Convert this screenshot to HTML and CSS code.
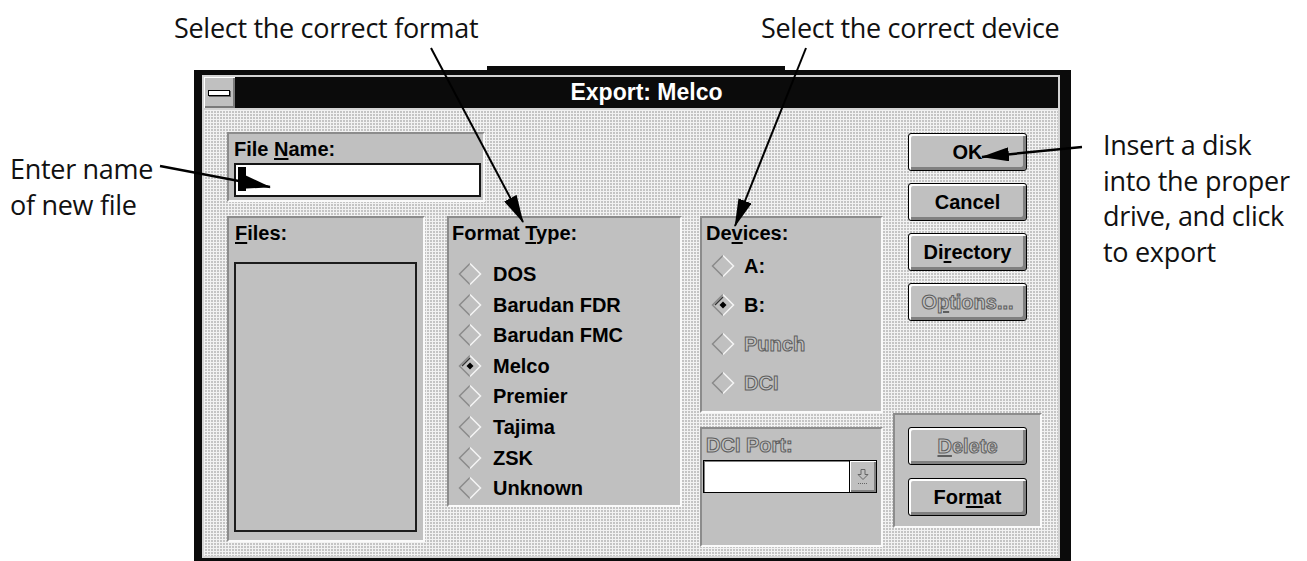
FILE: index.html
```html
<!DOCTYPE html>
<html lang="en">
<head>
    <meta charset="UTF-8">
    <meta name="viewport" content="width=device-width, initial-scale=1.0">
    <title>Export: Melco</title>
    <link rel="stylesheet" href="styles.css">
</head>
<body>
<div class="page">

    <div class="captions">
        <span class="note">Select the correct format</span>
        <span class="note">Select the correct device</span>
    </div>

    <div class="note note-left">Enter name<br>of new file</div>

    <div class="window">
        <div class="frame">
            <div class="titlebar">
                <div class="sysmenu"><span class="sysbar"></span></div>
                <div class="title">Export: Melco</div>
            </div>

            <div class="dialog">
                <div class="col-left">
                    <div class="group filename">
                        <div class="label">File <u>N</u>ame:</div>
                        <div class="textbox"><span class="caret"></span></div>
                    </div>
                    <div class="row">
                        <div class="group files">
                            <div class="label"><u>F</u>iles:</div>
                            <div class="listbox"></div>
                        </div>
                        <div class="group formats">
                            <div class="label">Format <u>T</u>ype:</div>
                            <ul class="radios">
                                <li class="radio"><svg viewBox="0 0 24 24"><path d="M12 1.5 1.5 12 12 22.5" fill="none" stroke="#8a8a8a" stroke-width="1.5"/><path d="M12 1.5 22.5 12 12 22.5" fill="none" stroke="#f4f4f4" stroke-width="1.5"/></svg>DOS</li>
                                <li class="radio"><svg viewBox="0 0 24 24"><path d="M12 1.5 1.5 12 12 22.5" fill="none" stroke="#8a8a8a" stroke-width="1.5"/><path d="M12 1.5 22.5 12 12 22.5" fill="none" stroke="#f4f4f4" stroke-width="1.5"/></svg>Barudan FDR</li>
                                <li class="radio"><svg viewBox="0 0 24 24"><path d="M12 1.5 1.5 12 12 22.5" fill="none" stroke="#8a8a8a" stroke-width="1.5"/><path d="M12 1.5 22.5 12 12 22.5" fill="none" stroke="#f4f4f4" stroke-width="1.5"/></svg>Barudan FMC</li>
                                <li class="radio"><svg viewBox="0 0 24 24"><path d="M12 1.5 1.5 12 12 22.5" fill="none" stroke="#8a8a8a" stroke-width="1.5"/><path d="M12 1.5 22.5 12 12 22.5" fill="none" stroke="#f4f4f4" stroke-width="1.5"/><path d="M12 4 4 12" fill="none" stroke="#333" stroke-width="1.2"/><path d="M12 8.5 15.5 12 12 15.5 8.5 12z" fill="#000"/></svg>Melco</li>
                                <li class="radio"><svg viewBox="0 0 24 24"><path d="M12 1.5 1.5 12 12 22.5" fill="none" stroke="#8a8a8a" stroke-width="1.5"/><path d="M12 1.5 22.5 12 12 22.5" fill="none" stroke="#f4f4f4" stroke-width="1.5"/></svg>Premier</li>
                                <li class="radio"><svg viewBox="0 0 24 24"><path d="M12 1.5 1.5 12 12 22.5" fill="none" stroke="#8a8a8a" stroke-width="1.5"/><path d="M12 1.5 22.5 12 12 22.5" fill="none" stroke="#f4f4f4" stroke-width="1.5"/></svg>Tajima</li>
                                <li class="radio"><svg viewBox="0 0 24 24"><path d="M12 1.5 1.5 12 12 22.5" fill="none" stroke="#8a8a8a" stroke-width="1.5"/><path d="M12 1.5 22.5 12 12 22.5" fill="none" stroke="#f4f4f4" stroke-width="1.5"/></svg>ZSK</li>
                                <li class="radio"><svg viewBox="0 0 24 24"><path d="M12 1.5 1.5 12 12 22.5" fill="none" stroke="#8a8a8a" stroke-width="1.5"/><path d="M12 1.5 22.5 12 12 22.5" fill="none" stroke="#f4f4f4" stroke-width="1.5"/></svg>Unknown</li>
                            </ul>
                        </div>
                    </div>
                </div>

                <div class="col-mid">
                    <div class="group devices">
                        <div class="label">De<u>v</u>ices:</div>
                        <ul class="radios">
                            <li class="radio"><svg viewBox="0 0 24 24"><path d="M12 1.5 1.5 12 12 22.5" fill="none" stroke="#8a8a8a" stroke-width="1.5"/><path d="M12 1.5 22.5 12 12 22.5" fill="none" stroke="#f4f4f4" stroke-width="1.5"/></svg>A:</li>
                            <li class="radio"><svg viewBox="0 0 24 24"><path d="M12 1.5 1.5 12 12 22.5" fill="none" stroke="#8a8a8a" stroke-width="1.5"/><path d="M12 1.5 22.5 12 12 22.5" fill="none" stroke="#f4f4f4" stroke-width="1.5"/><path d="M12 4 4 12" fill="none" stroke="#333" stroke-width="1.2"/><path d="M12 8.5 15.5 12 12 15.5 8.5 12z" fill="#000"/></svg>B:</li>
                            <li class="radio"><svg viewBox="0 0 24 24"><path d="M12 1.5 1.5 12 12 22.5" fill="none" stroke="#8a8a8a" stroke-width="1.5"/><path d="M12 1.5 22.5 12 12 22.5" fill="none" stroke="#f4f4f4" stroke-width="1.5"/></svg><span class="off">Punch</span></li>
                            <li class="radio"><svg viewBox="0 0 24 24"><path d="M12 1.5 1.5 12 12 22.5" fill="none" stroke="#8a8a8a" stroke-width="1.5"/><path d="M12 1.5 22.5 12 12 22.5" fill="none" stroke="#f4f4f4" stroke-width="1.5"/></svg><span class="off">DCI</span></li>
                        </ul>
                    </div>
                    <div class="group dciport">
                        <div class="label off">DCI Port:</div>
                        <div class="combo">
                            <div class="combo-field"></div>
                            <div class="combo-btn">
                                <svg width="14" height="18" viewBox="0 0 14 18"><path d="M5 1.5h4v5h3l-5 5-5-5h3z" fill="none" stroke="#666" stroke-width="1"/><path d="M2 15.5h10" stroke="#666" stroke-width="1" stroke-dasharray="1 1"/></svg>
                            </div>
                        </div>
                    </div>
                </div>

                <div class="col-right">
                    <div class="buttons">
                        <div class="btn">OK</div>
                        <div class="btn">Cancel</div>
                        <div class="btn">Di<u>r</u>ectory</div>
                        <div class="btn"><span class="off">O<u>p</u>tions...</span></div>
                    </div>
                    <div class="group actions">
                        <div class="btn"><span class="off"><u>D</u>elete</span></div>
                        <div class="btn">For<u>m</u>at</div>
                    </div>
                </div>
            </div>
        </div>
    </div>

    <div class="note note-right">Insert a disk<br>into the proper<br>drive, and click<br>to export</div>

    <!-- callout arrows drawn over the dialog -->
    <svg class="arrows" width="1307" height="561" viewBox="0 0 1307 561">
        <defs>
            <marker id="head" markerUnits="userSpaceOnUse" markerWidth="28" markerHeight="14" refX="27" refY="7" orient="auto">
                <path d="M0 0 28 7 0 14z" fill="#000"/>
            </marker>
        </defs>
        <line x1="431" y1="48" x2="523" y2="222" stroke="#000" stroke-width="2" marker-end="url(#head)"/>
        <line x1="806" y1="48" x2="735" y2="226" stroke="#000" stroke-width="2" marker-end="url(#head)"/>
        <line x1="160" y1="166" x2="270" y2="187" stroke="#000" stroke-width="2.5" marker-end="url(#head)"/>
        <line x1="1082" y1="147" x2="982" y2="157" stroke="#000" stroke-width="2.5" marker-end="url(#head)"/>
    </svg>

</div>
</body>
</html>
```

FILE: styles.css
```css
* {
    box-sizing: border-box;
}
body {
    margin: 0;
    background: #fff;
    font-family: "Open Sans", sans-serif;
}
.page {
    position: relative;
    width: 1307px;
    height: 561px;
    overflow: hidden;
    display: grid;
    grid-template-columns: 194px 877px 1fr;
    grid-template-rows: 70px 491px;
}

/* callout text */
.note {
    font-size: 27px;
    line-height: 35.5px;
    letter-spacing: -0.3px;
    color: #111;
}
.captions {
    grid-column: 1 / -1;
    display: flex;
    padding: 10px 0 0 174px;
}
.captions .note:first-child {
    width: 587px;
}
.note-left {
    padding: 81px 0 0 10px;
}
.note-right {
    padding: 57px 0 0 32px;
}
.arrows {
    position: absolute;
    left: 0;
    top: 0;
    pointer-events: none;
}

/* window chrome */
.window {
    position: relative;
    background: #0b0b0b;
    padding: 5px 11px 3px 8px;
}
.window::before {
    content: "";
    position: absolute;
    left: 293px;
    top: -4px;
    width: 298px;
    height: 4px;
    background: #0b0b0b;
}
.frame {
    border: 2px solid #d4d4d4;
}
.titlebar {
    display: flex;
    height: 33px;
    border-bottom: 2px solid #d4d4d4;
}
.sysmenu {
    width: 31px;
    display: flex;
    align-items: center;
    padding-left: 4px;
    background: #c0c0c0;
    box-shadow: inset 1px 1px #fff, inset -2px -2px #7a7a7a;
}
.sysbar {
    width: 22px;
    height: 6px;
    background: #fff;
    border: 1px solid #000;
    box-shadow: 1px 1px 0 #6a6a6a;
}
.title {
    flex: 1;
    background: #0b0b0b;
    color: #fff;
    font: bold 23px/31px "Liberation Sans", Arial, sans-serif;
    text-align: center;
}

/* dialog body */
.dialog {
    height: 446px;
    display: flex;
    padding: 22px 16px 0 23px;
    background-color: #c4c4c4;
    background-image: linear-gradient(90deg, #f2f2f2 1px, transparent 1px), linear-gradient(#f2f2f2 1px, transparent 1px);
    background-size: 3px 3px;
    font: bold 20px/20px "Liberation Sans", Arial, sans-serif;
    color: #000;
}
.dialog u {
    text-underline-offset: 2px;
}
.group {
    background: #c0c0c0;
    border: 2px solid;
    border-color: #8c8c8c #fafafa #fafafa #8c8c8c;
}
.off {
    color: #c4c4c4;
    -webkit-text-stroke: 1px #5e5e5e;
}

.col-left {
    width: 455px;
    display: flex;
    flex-direction: column;
}
.filename {
    width: 258px;
    height: 70px;
    padding: 5px 0 0 5px;
}
.textbox {
    margin-top: 4px;
    width: 247px;
    height: 34px;
    padding: 2px 0 0 2px;
    background: #fff;
    border: 2px solid #151515;
}
.caret {
    display: block;
    width: 8px;
    height: 24px;
    background: #000;
}
.row {
    display: flex;
    align-items: flex-start;
    gap: 22px;
    margin-top: 14px;
}
.files {
    width: 198px;
    height: 326px;
    padding: 5px 0 0 6px;
}
.listbox {
    margin: 19px 0 0 -1px;
    width: 183px;
    height: 270px;
    background: #c0c0c0;
    border: 2px solid #1c1c1c;
}
.formats {
    width: 235px;
    height: 291px;
    padding: 5px 0 0 3px;
}

.radios {
    list-style: none;
    margin: 0;
    padding: 0;
}
.radio {
    display: flex;
    align-items: center;
}
.radio svg {
    width: 24px;
    height: 24px;
    flex: none;
}
.formats .radios {
    margin-top: 15.7px;
    padding-left: 6px;
}
.formats .radio {
    height: 30.6px;
    gap: 11px;
}

.col-mid {
    width: 183px;
    margin-left: 18px;
    padding-top: 84px;
    display: flex;
    flex-direction: column;
    gap: 14px;
}
.devices {
    height: 197px;
    padding: 5px 0 0 4px;
}
.devices .radios {
    margin-top: 3.5px;
    padding-left: 5px;
}
.devices .radio {
    height: 39px;
    gap: 9px;
}
.dciport {
    height: 120px;
    padding: 6px 0 0 4px;
}
.combo {
    display: flex;
    margin: 5px 0 0 -3px;
}
.combo-field {
    width: 147px;
    height: 33px;
    background: #fff;
    border: 1px solid #000;
    box-shadow: inset 1px 1px #808080;
}
.combo-btn {
    width: 27px;
    height: 33px;
    display: flex;
    align-items: center;
    justify-content: center;
    background: #c0c0c0;
    border: 1px solid #000;
    border-left: none;
    box-shadow: inset 1px 1px #fff, inset -2px -2px #808080;
}

.col-right {
    width: 149px;
    margin-left: 10px;
    display: flex;
    flex-direction: column;
}
.buttons {
    display: flex;
    flex-direction: column;
    gap: 12px;
    padding: 1px 0 0 15px;
}
.btn {
    width: 119px;
    height: 38px;
    display: flex;
    align-items: center;
    justify-content: center;
    background: #c0c0c0;
    border: 1px solid #000;
    border-radius: 3px;
    box-shadow: inset 2px 2px #fff, inset -3px -3px #808080;
}
.actions {
    margin-top: 92px;
    height: 115px;
    padding: 12px 0 0 13px;
    display: flex;
    flex-direction: column;
    gap: 13px;
}
```
